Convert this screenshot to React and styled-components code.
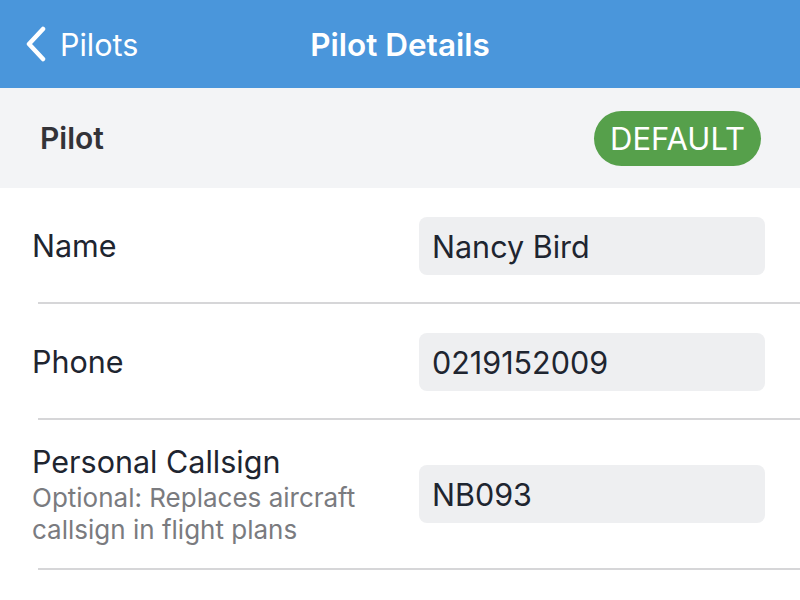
import React from "react"
import styled, { createGlobalStyle } from "styled-components"

const Global = createGlobalStyle`
  html, body {
    margin: 0;
    padding: 0;
    background: #ffffff;
    font-family: "Inter", "Liberation Sans", sans-serif;
  }
`

const NavBar = styled.div`
  height: 88px;
  background: #4a96db;
  display: grid;
  grid-template-columns: 1fr auto 1fr;
  align-items: center;
  color: #ffffff;
`

const Back = styled.div`
  display: flex;
  align-items: center;
  gap: 12px;
  padding-left: 24px;
  font-size: 30.5px;
`

const Title = styled.div`
  font-size: 31.5px;
  font-weight: 600;
`

const SectionHeader = styled.div`
  height: 100px;
  background: #f3f4f6;
  display: flex;
  align-items: center;
  justify-content: space-between;
  padding: 0 39px 0 40px;
`

const SectionTitle = styled.div`
  font-size: 30px;
  font-weight: 600;
  color: #333338;
`

const Pill = styled.div`
  background: #56a04b;
  color: #ffffff;
  font-size: 31px;
  height: 55px;
  padding: 0 16px;
  border-radius: 28px;
  display: flex;
  align-items: center;
`

const Row = styled.div`
  margin-left: 38px;
  padding: ${(p) => p.pad || "29px 35px 27px 0"};
  display: flex;
  align-items: ${(p) => p.align || "center"};
  justify-content: space-between;
  border-bottom: 2px solid #d6d6d8;
`

const Labels = styled.div`
  margin-left: -6px;
  display: flex;
  flex-direction: column;
`

const Label = styled.div`
  font-size: 30.5px;
  line-height: 36px;
  color: #1e2530;
`

const Hint = styled.div`
  font-size: 26px;
  line-height: 32px;
  color: #7a7b7f;
  margin-top: 2px;
`

const Field = styled.div`
  width: 346px;
  height: 58px;
  box-sizing: border-box;
  margin-top: ${(p) => p.offset || 0}px;
  background: #eeeff1;
  border-radius: 8px;
  padding-left: 13px;
  display: flex;
  align-items: center;
  font-size: 30.5px;
  color: #1e2530;
`

const rows = [
  { label: "Name", value: "Nancy Bird" },
  { label: "Phone", value: "0219152009" },
]

export default function App() {
  return (
    <>
      <Global />
      <NavBar>
        <Back>
          <svg width="24" height="36" viewBox="0 0 24 36">
            <path d="M19 3 L5 18 L19 33" fill="none" stroke="#fff" strokeWidth="4.5" strokeLinecap="round" strokeLinejoin="round" />
          </svg>
          Pilots
        </Back>
        <Title>Pilot Details</Title>
        <div />
      </NavBar>
      <SectionHeader>
        <SectionTitle>Pilot</SectionTitle>
        <Pill>DEFAULT</Pill>
      </SectionHeader>
      {rows.map((r) => (
        <Row key={r.label}>
          <Labels>
            <Label>{r.label}</Label>
          </Labels>
          <Field>{r.value}</Field>
        </Row>
      ))}
      <Row pad="24px 35px 22px 0" align="flex-start">
        <Labels>
          <Label>Personal Callsign</Label>
          <Hint>
            Optional: Replaces aircraft
            <br />
            callsign in flight plans
          </Hint>
        </Labels>
        <Field offset={21}>NB093</Field>
      </Row>
    </>
  )
}
